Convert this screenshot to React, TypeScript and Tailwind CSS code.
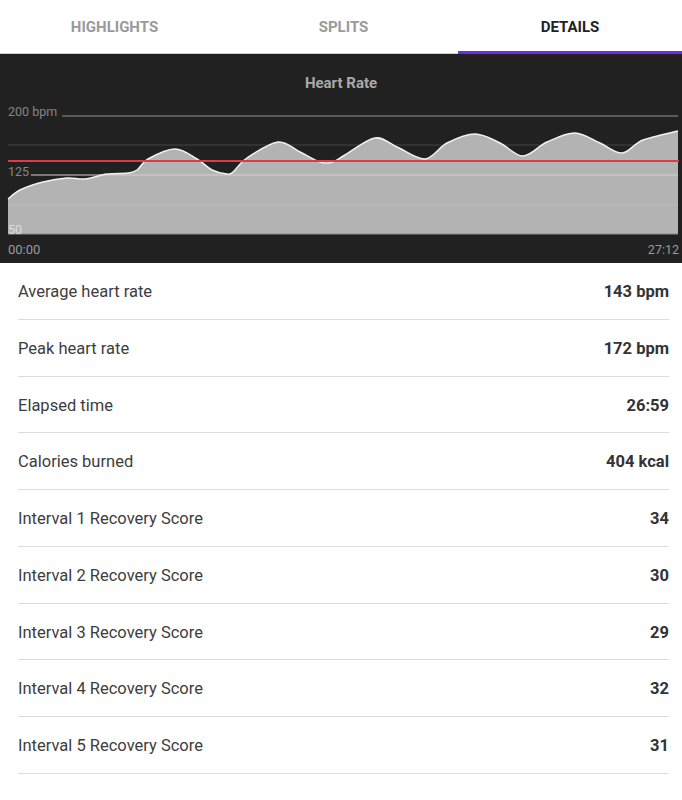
import React from "react";

const pts: [number, number][] = [
  [8, 199], [20, 190], [43, 182], [67, 178], [85, 179], [107, 174], [128, 173], [137, 170],
  [148, 159], [175, 149], [197, 159], [212, 170], [227, 174], [233, 172], [247, 158],
  [278, 142], [300, 152], [320, 162], [333, 162], [345, 155], [375, 138], [397, 147],
  [425, 159], [447, 143], [475, 134], [500, 143], [523, 156], [547, 142], [575, 133],
  [600, 143], [622, 153], [643, 140], [678, 131],
];

function curve(p: [number, number][]) {
  let d = `M${p[0][0]},${p[0][1]}`;
  for (let i = 0; i < p.length - 1; i++) {
    const p0 = p[i - 1] || p[i];
    const p1 = p[i];
    const p2 = p[i + 1];
    const p3 = p[i + 2] || p2;
    const c1x = p1[0] + (p2[0] - p0[0]) / 6;
    const c1y = p1[1] + (p2[1] - p0[1]) / 6;
    const c2x = p2[0] - (p3[0] - p1[0]) / 6;
    const c2y = p2[1] - (p3[1] - p1[1]) / 6;
    d += ` C${c1x.toFixed(1)},${c1y.toFixed(1)} ${c2x.toFixed(1)},${c2y.toFixed(1)} ${p2[0]},${p2[1]}`;
  }
  return d;
}

const line = curve(pts);
const area = `${line} L678,234 L8,234 Z`;

const rows: [string, string][] = [
  ["Average heart rate", "143 bpm"],
  ["Peak heart rate", "172 bpm"],
  ["Elapsed time", "26:59"],
  ["Calories burned", "404 kcal"],
  ["Interval 1 Recovery Score", "34"],
  ["Interval 2 Recovery Score", "30"],
  ["Interval 3 Recovery Score", "29"],
  ["Interval 4 Recovery Score", "32"],
  ["Interval 5 Recovery Score", "31"],
];

export default function App() {
  return (
    <div className="w-[682px] min-h-[800px] bg-white" style={{ fontFamily: "Roboto, 'Liberation Sans', sans-serif" }}>
      <div className="flex h-[54px] border-b border-[#cfcfcf]">
        {["HIGHLIGHTS", "SPLITS", "DETAILS"].map((t, i) => (
          <div key={t} className={`relative flex items-center justify-center pt-[1px] ${i === 2 ? "w-[224px]" : "flex-1"}`}>
            <span className={`text-[15px] font-bold ${i === 2 ? "text-[#222]" : "text-[#9a9a9a]"}`}>{t}</span>
            {i === 2 && <div className="absolute left-0 right-0 bottom-[-1px] h-[3px] bg-[#6b2fe6]" />}
          </div>
        ))}
      </div>
      <div className="bg-[#212121] h-[209px] flex flex-col">
        <div className="h-[46px] flex items-start justify-center pt-[19px]">
          <span className="text-[15px] font-bold text-[#aaaaaa] leading-[20px]">Heart Rate</span>
        </div>
        <svg width="682" height="163" viewBox="0 100 682 163" className="block">
          <line x1="8" y1="145" x2="678" y2="145" stroke="#383838" strokeWidth="1.5" />
          <line x1="62" y1="116" x2="678" y2="116" stroke="#6e6e6e" strokeWidth="1.5" />
          <path d={area} fill="#b3b3b3" />
          <line x1="31" y1="175" x2="678" y2="175" stroke="#d2d2d2" strokeWidth="1.2" />
          <line x1="8" y1="205" x2="678" y2="205" stroke="#bdbdbd" strokeWidth="1" />
          <line x1="8" y1="234" x2="678" y2="234" stroke="#8e8e8e" strokeWidth="1" />
          <path d={line} fill="none" stroke="#f2f2f2" strokeWidth="1.5" />
          <line x1="8" y1="161" x2="679" y2="161" stroke="#e0394a" strokeWidth="2" />
          <text x="8" y="116" fontSize="12.5" fill="#858585">200 bpm</text>
          <text x="8" y="176" fontSize="12.5" fill="#858585">125</text>
          <text x="8" y="234" fontSize="12.5" fill="#dedede">50</text>
          <text x="8" y="254" fontSize="13" fill="#9a9a9a">00:00</text>
          <text x="679" y="254" fontSize="12.5" fill="#9a9a9a" textAnchor="end">27:12</text>
        </svg>
      </div>
      <div className="flex flex-col">
        {rows.map(([l, v]) => (
          <div key={l} className="ml-[18px] mr-[13px] h-[56.75px] pt-[3px] border-b border-[#dddddd] flex items-center justify-between">
            <span className="text-[16.5px] text-[#3d3d3d]">{l}</span>
            <span className="text-[16.5px] font-bold text-[#333333]">{v}</span>
          </div>
        ))}
      </div>
    </div>
  );
}
